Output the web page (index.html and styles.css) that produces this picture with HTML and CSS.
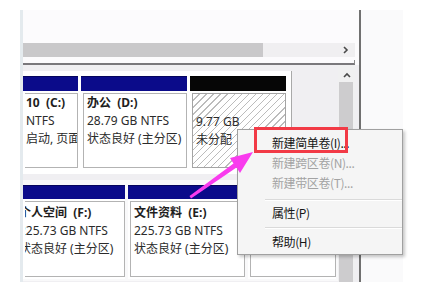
FILE: index.html
```html
<!DOCTYPE html>
<html lang="zh-CN">
<head>
  <meta charset="utf-8">
  <title>磁盘管理</title>
  <link rel="stylesheet" href="styles.css">
</head>
<body>
  <div class="frame">
    <div class="main">
      <div class="toppane"></div>

      <!-- horizontal scrollbar of the volume list -->
      <div class="hscroll">
        <div class="hthumb"></div>
        <div class="htrack">
          <svg class="chev" width="6" height="8" viewBox="0 0 6 8"><polyline points="1,1 4,4 1,7" fill="none" stroke="#4a4a4a" stroke-width="1.6"/></svg>
        </div>
      </div>
      <div class="splitter"></div>

      <div class="lowerpane">
        <div class="disks">
          <div class="disk disk0">
            <div class="part p-c">
              <div class="bar"></div>
              <div class="body"><div class="box cut">
                <div class="name">10&nbsp;&nbsp;(C:)</div>
                <div>NTFS</div>
                <div>启动, 页面</div>
              </div></div>
            </div>
            <div class="part p-d">
              <div class="bar"></div>
              <div class="body"><div class="box">
                <div class="name">办公&nbsp;&nbsp;(D:)</div>
                <div>28.79 GB NTFS</div>
                <div>状态良好 (主分区)</div>
              </div></div>
            </div>
            <div class="part p-u">
              <div class="bar black"></div>
              <div class="body"><div class="box hatch">
                <div>9.77 GB</div>
                <div>未分配</div>
              </div></div>
            </div>
          </div>

          <div class="disk disk1">
            <div class="part p-f">
              <div class="bar"></div>
              <div class="body"><div class="box cut">
                <div class="shift">
                  <div class="name">个人空间&nbsp;&nbsp;(F:)</div>
                  <div>225.73 GB NTFS</div>
                  <div>状态良好 (主分区)</div>
                </div>
              </div></div>
            </div>
            <div class="part p-e">
              <div class="bar"></div>
              <div class="body"><div class="box">
                <div class="name">文件资料&nbsp;&nbsp;(E:)</div>
                <div>225.73 GB NTFS</div>
                <div>状态良好 (主分区)</div>
              </div></div>
            </div>
            <div class="part p-g">
              <div class="bar"></div>
              <div class="body"><div class="box"></div></div>
            </div>
          </div>
        </div>

        <div class="vscroll">
          <div class="up">
            <svg width="8" height="6" viewBox="0 0 8 6"><polyline points="1,5 4,2 7,5" fill="none" stroke="#4a4a4a" stroke-width="1.6"/></svg>
          </div>
          <div class="vthumb"></div>
        </div>
      </div>
    </div>
    <div class="divider"></div>
    <div class="side"></div>
  </div>

  <!-- context menu on the unallocated space -->
  <div class="menu">
    <div class="item">新建简单卷(I)...</div>
    <div class="item off">新建跨区卷(N)...</div>
    <div class="item off">新建带区卷(T)...</div>
    <div class="sep first"></div>
    <div class="item">属性(P)</div>
    <div class="sep"></div>
    <div class="item">帮助(H)</div>
  </div>

  <div class="mark"></div>

  <svg class="arrow" width="433" height="301" viewBox="0 0 433 301">
    <polygon points="253,152 240,173 236.5,167.5 191,198.5 189.5,196 233.5,163.5 230,158" fill="#f93bee"/>
  </svg>
</body>
</html>
```

FILE: styles.css
```css
*{box-sizing:border-box}
html,body{margin:0;background:#fff}
body{font-family:"Noto Sans","Noto Sans CJK SC",sans-serif;font-size:12px;color:#2b2b2b;
  width:433px;height:301px;overflow:hidden;position:relative}

.frame{display:flex;margin:10px 0 0 20px;width:383px;height:272px}
.main{width:339px;border-left:3px solid #e4eaee;background:#fcfbfd;display:flex;flex-direction:column}
.divider{width:2px;background:#707070}
.side{width:42px;background:#fafafb}

.toppane{height:33px}
.hscroll{display:flex;height:14px}
.hthumb{width:240px;background:#c9c8ca}
.htrack{width:92px;background:#f0eff1;display:flex;align-items:center;justify-content:flex-end;padding-right:6px}
.splitter{width:332px;height:5px;margin-top:3px;border-bottom:2px solid #7a787c;border-right:1px solid #8c8c8c}

.lowerpane{flex:1;display:flex;background:#f0eff2}
.disks{width:315px;padding-top:6px}
.disk{display:flex;gap:3px;background:#fff}
.disk0{width:269px;height:103px;padding:5px 5px 4px 0;border-right:1px solid #a9a9a9}
.disk1{width:315px;height:101px;margin-top:6px;padding:5px 0 2px 0;background:#f9f9fa}

.part{display:flex;flex-direction:column}
.p-c{width:55px}
.p-d{width:106px}
.p-u{width:96px}
.p-f{width:102px}
.p-e{width:117px}
.p-g{width:88px}

.bar{height:15px;background:#0b0b8a;border-top:1px solid #05055e}
.disk1 .bar{height:14px}
.bar.black{background:#060606;border-top-color:#000}
.body{flex:1;padding:2px 0 2px 2px;background:#fff}
.box{height:100%;border:1px solid #b3b3b3;background:#fff;padding:0 3px;line-height:18px;white-space:nowrap;overflow:hidden}
.disk1 .box{padding-top:2px}
.name{font-weight:bold;color:#1e1e1e}

.cut{border-left:none;padding-left:1px}
.shift{margin-left:-7px}

.hatch{padding:19px 3px 0 3px;border-color:#a4a4a4;
  background:repeating-linear-gradient(135deg,#fff 0 4px,#bcbcbc 4px 5px)}

.vscroll{width:17px;display:flex;flex-direction:column;background:#f0f0f1}
.up{height:17px;display:flex;align-items:center;justify-content:center;padding-top:2px}
.vthumb{flex:1;margin:0 2px 0 1px;background:#cdccce}

.menu{position:absolute;left:237px;top:129px;width:166px;height:126px;padding:3px 0 2px 0;
  font-family:"Noto Sans CJK SC",sans-serif;letter-spacing:-0.4px;
  background:#f5f5f5;border:1px solid #a0a0a0;box-shadow:2px 2px 3px rgba(0,0,0,.22)}
.item{height:20px;line-height:20px;padding-left:34px;color:#161616}
.item.off{color:#a3a3a3}
.sep{margin:4px 0 3px 27px;height:2px;border-top:1px solid #dadada;border-bottom:1px solid #fff}
.sep.first{margin-top:6px;margin-bottom:2px}

.mark{position:absolute;left:254px;top:127px;width:94px;height:26px;border:3px solid #f23a46}
.arrow{position:absolute;left:0;top:0;pointer-events:none}
```
